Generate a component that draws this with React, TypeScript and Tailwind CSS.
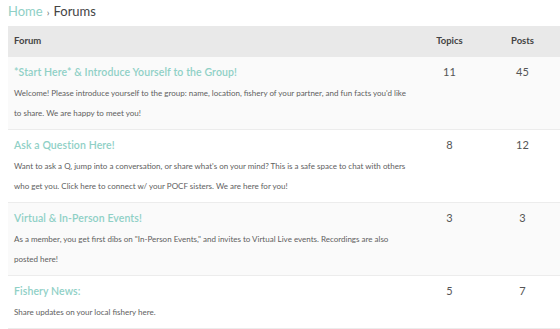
const forums = [
  {
    title: "*Start Here* & Introduce Yourself to the Group!",
    desc: "Welcome! Please introduce yourself to the group: name, location, fishery of your partner, and fun facts you'd like to share. We are happy to meet you!",
    topics: 11,
    posts: 45,
  },
  {
    title: "Ask a Question Here!",
    desc: "Want to ask a Q, jump into a conversation, or share what's on your mind? This is a safe space to chat with others who get you. Click here to connect w/ your POCF sisters. We are here for you!",
    topics: 8,
    posts: 12,
  },
  {
    title: "Virtual & In-Person Events!",
    desc: "As a member, you get first dibs on \"In-Person Events,\" and invites to Virtual Live events. Recordings are also posted here!",
    topics: 3,
    posts: 3,
  },
  {
    title: "Fishery News:",
    desc: "Share updates on your local fishery here.",
    topics: 5,
    posts: 7,
  },
];

export default function App() {
  return (
    <div className="min-h-screen bg-white pl-2 text-[#555] font-['Lato',sans-serif] overflow-hidden">
      <div className="h-[22px] flex items-center text-[13px] leading-none pt-px">
        <span className="text-[#8fd0c6]">Home</span>
        <span className="mx-1 text-[10px] text-[#666]">›</span>
        <span className="text-[#444]">Forums</span>
      </div>
      <div className="mt-1">
        <div className="grid grid-cols-[406px_71px_75px] h-[31px] items-center bg-[#e9e9e9] text-[9.5px] font-bold text-[#444]">
          <div className="pl-[6px]">Forum</div>
          <div className="text-center">Topics</div>
          <div className="text-center">Posts</div>
        </div>
        {forums.map((f, i) => (
          <div
            key={f.title}
            className={`grid grid-cols-[406px_71px_75px] border-b border-[#ececec] ${i % 2 === 0 ? "bg-[#fafafa]" : "bg-white"}`}
          >
            <div className="pl-[6px] pr-2 pt-2 pb-[6px]">
              <div className="text-[10.5px] leading-[14px] font-semibold tracking-[0.1px] text-[#8fd0c6]">{f.title}</div>
              <p className="mt-1 text-[8px] leading-[20px] text-[#5e5e5e] max-w-[400px]">{f.desc}</p>
            </div>
            <div className="pt-2 text-center text-[11px] leading-[14px] text-[#555]">{f.topics}</div>
            <div className="pt-2 text-center text-[11px] leading-[14px] text-[#555]">{f.posts}</div>
          </div>
        ))}
      </div>
    </div>
  );
}
